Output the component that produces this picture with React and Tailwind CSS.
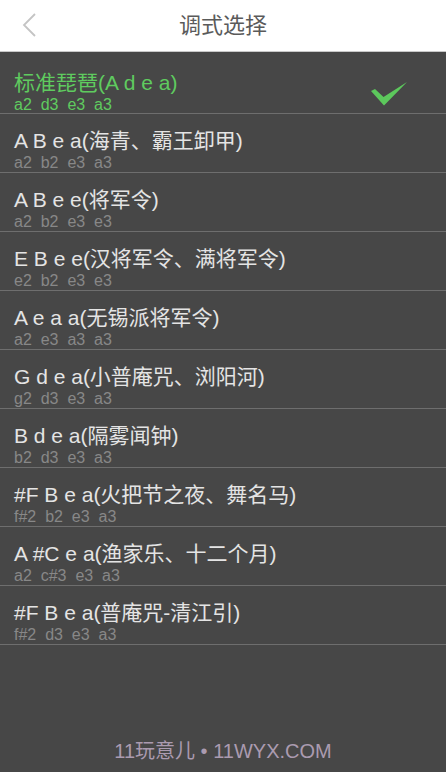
import React from 'react';

const tunings = [
  { name: '标准琵琶(A d e a)', notes: 'a2  d3  e3  a3', active: true },
  { name: 'A B e a(海青、霸王卸甲)', notes: 'a2  b2  e3  a3' },
  { name: 'A B e e(将军令)', notes: 'a2  b2  e3  e3' },
  { name: 'E B e e(汉将军令、满将军令)', notes: 'e2  b2  e3  e3' },
  { name: 'A e a a(无锡派将军令)', notes: 'a2  e3  a3  a3' },
  { name: 'G d e a(小普庵咒、浏阳河)', notes: 'g2  d3  e3  a3' },
  { name: 'B d e a(隔雾闻钟)', notes: 'b2  d3  e3  a3' },
  { name: '#F B e a(火把节之夜、舞名马)', notes: 'f#2  b2  e3  a3' },
  { name: 'A #C e a(渔家乐、十二个月)', notes: 'a2  c#3  e3  a3' },
  { name: '#F B e a(普庵咒-清江引)', notes: 'f#2  d3  e3  a3' },
];

const font = { fontFamily: '"Liberation Sans", "Noto Sans CJK SC", sans-serif' };

export default function App() {
  return (
    <div className="w-[446px] h-[772px] flex flex-col bg-[#474747] overflow-hidden" style={font}>
      <div className="h-[52px] bg-white border-b border-[#c8c8c8] flex items-center relative shrink-0">
        <svg className="absolute left-[21px] top-[13px]" width="16" height="24" viewBox="0 0 16 24">
          <path d="M14 1 L3 12 L14 23" fill="none" stroke="#c4c4c4" strokeWidth="1.8" />
        </svg>
        <div className="w-full text-center text-[22px] leading-[28px] text-[#5a5a5a]">调式选择</div>
      </div>
      <div className="flex flex-col">
        {tunings.map((t, i) => (
          <div
            key={i}
            className={`${i === 0 ? 'h-[62px] pt-[19px]' : 'h-[59px] pt-[15px]'} border-b border-[#6e6e6e] flex items-start justify-between pl-[14px] pr-[39px]`}
          >
            <div className="flex flex-col">
              <div className={`text-[21px] leading-[24px] ${t.active ? 'text-[#5fcb5f]' : 'text-[#e4e4e4]'}`}>{t.name}</div>
              <div className={`mt-[1px] text-[16px] leading-[18px] whitespace-pre ${t.active ? 'text-[#5fcb5f]' : 'text-[#888888]'}`}>{t.notes}</div>
            </div>
            {t.active && (
              <svg className="mt-[11px]" width="36" height="24" viewBox="0 0 36 24">
                <path d="M0 9 L4 7 L12.5 15 L36 0 L13 23.5 Z" fill="#5cc85c" />
              </svg>
            )}
          </div>
        ))}
      </div>
      <div className="flex-1 flex items-end justify-center pb-[9px]">
        <div className="text-[20px] leading-[24px] text-[#ab9bb0]">11玩意儿 • 11WYX.COM</div>
      </div>
    </div>
  );
}
